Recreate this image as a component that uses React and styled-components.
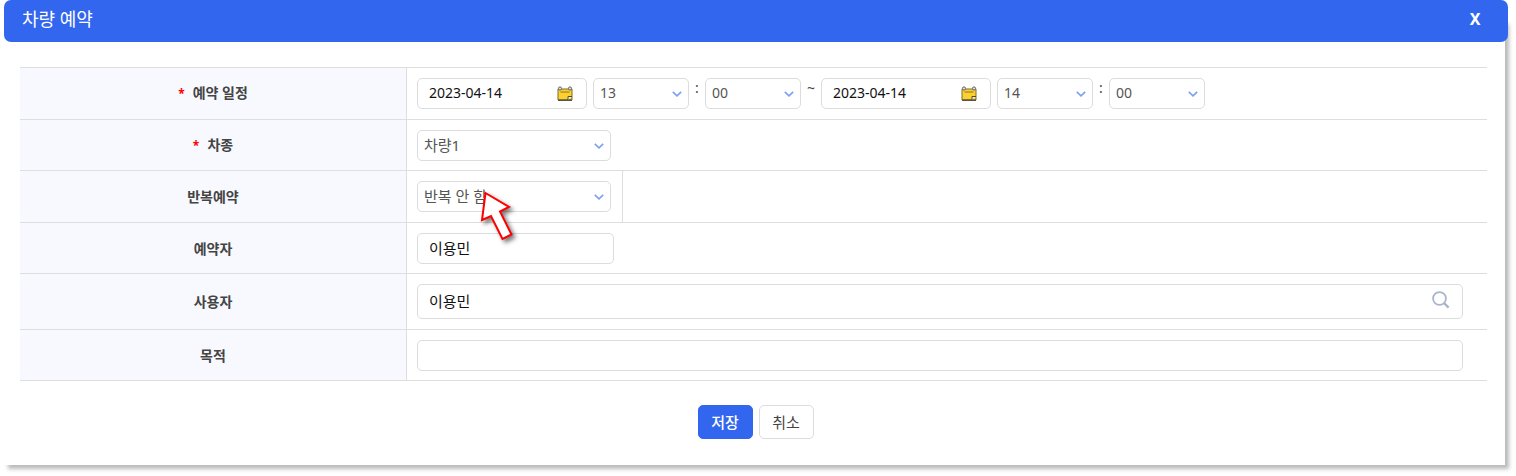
import { useState } from "react";
import styled, { createGlobalStyle } from "styled-components";

const HOURS = Array.from({ length: 24 }, (_, i) => String(i).padStart(2, "0"));
const MINUTES = ["00", "10", "20", "30", "40", "50"];

const Chevron = () => (
  <ChevronIcon viewBox="0 0 10 6" aria-hidden="true">
    <path d="M0.8 0.8 L5 4.8 L9.2 0.8" />
  </ChevronIcon>
);

const CalendarIcon = () => (
  <svg width="16" height="16" viewBox="0 0 16 16" aria-hidden="true">
    <path d="M1 3h14v11H1z" fill="#fbd02f" stroke="#7d6c2c" />
    <path d="M1 14.2h14" stroke="#4d4a3a" strokeWidth="1.4" />
    <path d="M3.5 6h9" stroke="#8a7420" />
    <path d="M11 14v-3.5h4" fill="#fff3b5" stroke="#4d4a3a" />
    <circle cx="3" cy="2.5" r="1.6" fill="#ddd" stroke="#666" />
    <circle cx="13" cy="2.5" r="1.6" fill="#ddd" stroke="#666" />
  </svg>
);

const SearchIcon = () => (
  <svg width="18" height="18" viewBox="0 0 18 18" aria-hidden="true">
    <circle cx="7.5" cy="7.5" r="6.4" fill="none" stroke="#a9b5cb" strokeWidth="1.8" />
    <path d="M12 12 L16.6 16.6" stroke="#a9b5cb" strokeWidth="2.4" />
  </svg>
);

const Dropdown = ({ label, options, value, onChange, wide, id }) => (
  <SelectBox $wide={wide}>
    <Select
      id={id}
      aria-label={label}
      value={value}
      $wide={wide}
      onChange={(e) => onChange(e.target.value)}
    >
      {options.map((option) => (
        <option key={option}>{option}</option>
      ))}
    </Select>
    <Chevron />
  </SelectBox>
);

const DateField = ({ label, value, onChange }) => (
  <DateBox>
    <FieldInput
      type="text"
      aria-label={label}
      value={value}
      onChange={(e) => onChange(e.target.value)}
    />
    <IconButton type="button" aria-label={`${label} 선택`}>
      <CalendarIcon />
    </IconButton>
  </DateBox>
);

const App = () => {
  const [form, setForm] = useState({
    startDate: "2023-04-14",
    startHour: "13",
    startMinute: "00",
    endDate: "2023-04-14",
    endHour: "14",
    endMinute: "00",
    car: "차량1",
    repeat: "반복 안 함",
    booker: "이용민",
    user: "이용민",
    purpose: "",
  });
  const update = (key) => (value) => setForm({ ...form, [key]: value });

  return (
    <>
      <GlobalStyle />
      <Dialog>
        <Header>
          <Title>차량 예약</Title>
          <CloseButton type="button" aria-label="닫기">
            X
          </CloseButton>
        </Header>
        <Body onSubmit={(e) => e.preventDefault()}>
          <Table>
            <colgroup>
              <LabelCol />
              <RepeatCol />
              <col />
            </colgroup>
            <tbody>
              <tr>
                <Th scope="row">
                  <Required>*</Required>예약 일정
                </Th>
                <Td colSpan={2}>
                  <Schedule>
                    <DateField label="시작일" value={form.startDate} onChange={update("startDate")} />
                    <Time>
                      <Dropdown label="시작 시" options={HOURS} value={form.startHour} onChange={update("startHour")} />
                      <Separator $width="16px">:</Separator>
                      <Dropdown label="시작 분" options={MINUTES} value={form.startMinute} onChange={update("startMinute")} />
                    </Time>
                    <Separator $width="8px">~</Separator>
                    <DateField label="종료일" value={form.endDate} onChange={update("endDate")} />
                    <Time>
                      <Dropdown label="종료 시" options={HOURS} value={form.endHour} onChange={update("endHour")} />
                      <Separator $width="16px">:</Separator>
                      <Dropdown label="종료 분" options={MINUTES} value={form.endMinute} onChange={update("endMinute")} />
                    </Time>
                  </Schedule>
                </Td>
              </tr>
              <tr>
                <Th scope="row">
                  <Required>*</Required>
                  <label htmlFor="car">차종</label>
                </Th>
                <Td colSpan={2}>
                  <Dropdown id="car" wide options={["차량1", "차량2"]} value={form.car} onChange={update("car")} />
                </Td>
              </tr>
              <tr>
                <Th scope="row">
                  <label htmlFor="repeat">반복예약</label>
                </Th>
                <Td $divided>
                  <Pointed>
                    <Dropdown id="repeat" wide options={["반복 안 함", "매일", "매주", "매월"]} value={form.repeat} onChange={update("repeat")} />
                    <Pointer viewBox="0 0 44 60" aria-hidden="true">
                      <path d="M8.5 4 L32 18 L23 22.5 L34.5 45.5 L25.5 50 L14 27 L5 31 Z" />
                    </Pointer>
                  </Pointed>
                </Td>
                <Td />
              </tr>
              <tr>
                <Th scope="row">
                  <label htmlFor="booker">예약자</label>
                </Th>
                <Td colSpan={2}>
                  <TextBox $width="197px">
                    <FieldInput id="booker" type="text" value={form.booker} onChange={(e) => update("booker")(e.target.value)} />
                  </TextBox>
                </Td>
              </tr>
              <tr>
                <Th scope="row">
                  <label htmlFor="user">사용자</label>
                </Th>
                <Td colSpan={2}>
                  <TextBox $tall>
                    <FieldInput id="user" type="text" value={form.user} onChange={(e) => update("user")(e.target.value)} />
                    <IconButton type="button" aria-label="사용자 검색" $raised>
                      <SearchIcon />
                    </IconButton>
                  </TextBox>
                </Td>
              </tr>
              <tr>
                <Th scope="row">
                  <label htmlFor="purpose">목적</label>
                </Th>
                <Td colSpan={2}>
                  <TextBox>
                    <FieldInput id="purpose" type="text" value={form.purpose} onChange={(e) => update("purpose")(e.target.value)} />
                  </TextBox>
                </Td>
              </tr>
            </tbody>
          </Table>
          <Actions>
            <Button type="submit" $primary>
              저장
            </Button>
            <Button type="button">취소</Button>
          </Actions>
        </Body>
      </Dialog>
    </>
  );
};
export default App;

const GlobalStyle = createGlobalStyle`
  * {
    box-sizing: border-box;
  }
  body {
    margin: 0;
    background: #fff;
    color: #444;
    font-family: "Noto Sans", "Noto Sans CJK KR", sans-serif;
    font-size: 14px;
  }
  button,
  input,
  select {
    margin: 0;
    font: inherit;
    color: inherit;
  }
`;
const Dialog = styled.main`
  padding: 0 11px 11px 4px;
`;
const Header = styled.header`
  position: relative;
  z-index: 1;
  display: flex;
  align-items: center;
  justify-content: space-between;
  height: 42px;
  margin-right: -3px;
  padding: 0 26px 4px 18px;
  border-radius: 7px;
  background: #3266ee;
  color: #fff;
`;
const Title = styled.h1`
  margin: 0;
  font-size: 18px;
  font-weight: 400;
  line-height: 24px;
`;
const CloseButton = styled.button`
  padding: 0;
  width: 14px;
  border: 0;
  background: none;
  font-size: 16px;
  font-weight: 700;
  line-height: 24px;
  cursor: pointer;
`;
/* starts under the header so its shadow shows beside the header's lower half */
const Body = styled.form`
  margin-top: -22px;
  padding: 47px 18px 26px 16px;
  background: #fff;
  box-shadow: 4px 4px 4px #bbb;
`;
const Table = styled.table`
  width: 100%;
  table-layout: fixed;
  border-spacing: 0;
  border-top: 1px solid #dedede;
  tr:nth-child(even) > * {
    padding-bottom: 9px;
  }
`;
const LabelCol = styled.col`
  width: 387px;
`;
const RepeatCol = styled.col`
  width: 216px;
`;
const Th = styled.th`
  padding: 10px 8px;
  border-right: 1px solid #dedede;
  border-bottom: 1px solid #dedede;
  background: #f8f9fe;
  font-weight: 700;
  line-height: 20px;
`;
const Td = styled.td`
  padding: 10px 24px 10px 10px;
  border-bottom: 1px solid #dedede;
  ${({ $divided }) =>
    $divided && "padding-right: 0; border-right: 1px solid #dedede;"}
`;
const Required = styled.span`
  margin-right: 8px;
  color: #f00;
  font-size: 12px;
`;
const Schedule = styled.div`
  display: flex;
  gap: 6px;
`;
const Time = styled.div`
  display: flex;
`;
const Separator = styled.span`
  width: ${({ $width }) => $width};
  line-height: 20px;
  text-align: center;
`;
const Box = styled.div`
  display: flex;
  align-items: center;
  height: 31px;
  border: 1px solid #dcdcdc;
  border-radius: 5px;
  background: #fff;
`;
const SelectBox = styled(Box)`
  position: relative;
  width: ${({ $wide }) => ($wide ? "194px" : "96px")};
`;
const Select = styled.select`
  width: 100%;
  height: 100%;
  padding: 0 24px 2px 6px;
  border: 0;
  background: none;
  appearance: none;
  color: #555;
  font-size: ${({ $wide }) => ($wide ? "15px" : "14px")};
`;
const ChevronIcon = styled.svg`
  position: absolute;
  right: 6px;
  width: 10px;
  height: 6px;
  pointer-events: none;
  fill: none;
  stroke: #7e9ff5;
  stroke-width: 1.6;
`;
const DateBox = styled(Box)`
  width: 170px;
  padding-right: 13px;
`;
const TextBox = styled(Box)`
  width: ${({ $width }) => $width || "100%"};
  height: ${({ $tall }) => ($tall ? "35px" : "31px")};
  padding-right: 12px;
  font-size: 15px;
`;
const FieldInput = styled.input`
  flex: 1;
  min-width: 0;
  height: 100%;
  padding: 0 0 2px 11px;
  border: 0;
  background: none;
  color: #111;
`;
const IconButton = styled.button`
  display: flex;
  padding: ${({ $raised }) => ($raised ? "0 0 4px" : "0")};
  border: 0;
  background: none;
  cursor: pointer;
`;
const Pointed = styled.div`
  position: relative;
`;
const Pointer = styled.svg`
  position: absolute;
  top: 8px;
  left: 60px;
  width: 44px;
  height: 60px;
  z-index: 1;
  pointer-events: none;
  fill: #fff;
  stroke: #f00;
  stroke-width: 2;
  filter: drop-shadow(3px 3px 2px rgba(0, 0, 0, 0.5));
`;
/* centred on the header, which is wider than the body */
const Actions = styled.div`
  display: flex;
  justify-content: center;
  gap: 6px;
  margin: 24px -4px 0 0;
`;
const Button = styled.button`
  width: 55px;
  height: 34px;
  padding: 0 0 2px;
  border: 1px solid ${({ $primary }) => ($primary ? "#3266ee" : "#dcdcdc")};
  border-radius: 5px;
  background: ${({ $primary }) => ($primary ? "#3266ee" : "#fff")};
  color: ${({ $primary }) => ($primary ? "#fff" : "#444")};
  font-size: 15px;
  font-weight: ${({ $primary }) => ($primary ? 500 : 400)};
  cursor: pointer;
`;
